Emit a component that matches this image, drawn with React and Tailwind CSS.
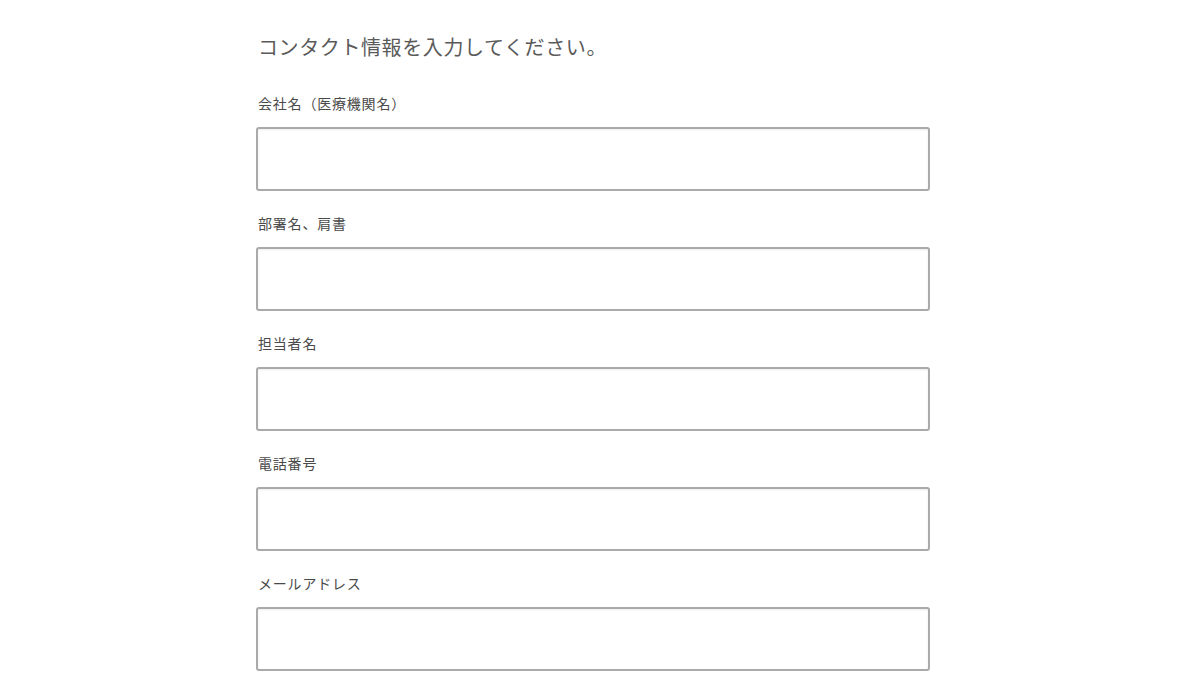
export default function App() {
  const fields = ["会社名（医療機関名）", "部署名、肩書", "担当者名", "電話番号", "メールアドレス"];
  return (
    <div className="min-h-[700px] bg-white" style={{ fontFamily: '"Noto Sans CJK JP", "Noto Sans", sans-serif' }}>
      <div className="ml-[256px] w-[674px] pt-[33px]">
        <h1 className="text-[20px] leading-[28px] text-[#5a5a5a] font-normal pl-[2px] tracking-[0.6px]">コンタクト情報を入力してください。</h1>
        <div className="mt-[32px] flex flex-col gap-[22px]">
          {fields.map((f) => (
            <div key={f} className="flex flex-col gap-[14px]">
              <label className="text-[14px] leading-[20px] text-[#4a4a4a] pl-[2px] tracking-[0.8px]">{f}</label>
              <input
                type="text"
                className="h-[64px] w-full rounded-[3px] border-2 border-[#aaaaaa] bg-white shadow-[inset_0_1px_2px_rgba(0,0,0,0.08)] outline-none px-3"
              />
            </div>
          ))}
        </div>
      </div>
    </div>
  );
}
